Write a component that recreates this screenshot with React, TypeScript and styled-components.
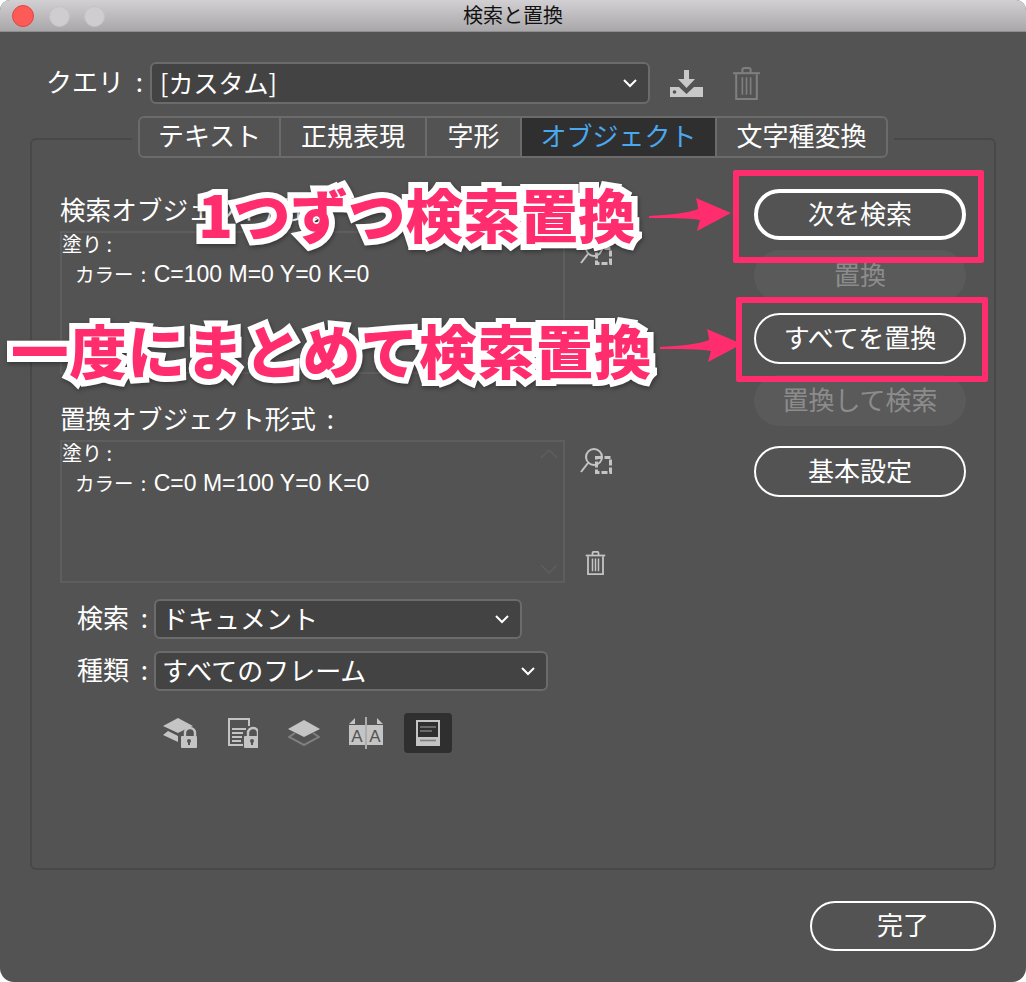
import React from "react";
import styled, { createGlobalStyle } from "styled-components";

const GlobalStyle = createGlobalStyle`
  html, body {
    margin: 0;
    padding: 0;
    background: #ffffff;
  }
  * {
    box-sizing: border-box;
  }
`;

const Window = styled.div`
  width: 1026px;
  height: 982px;
  position: relative;
  overflow: hidden;
  background: #535353;
  border-radius: 10px 10px 14px 14px;
  font-family: "Noto Sans CJK JP", "Noto Sans", sans-serif;
  color: #ffffff;
`;

const TitleBar = styled.div`
  height: 32px;
  display: flex;
  align-items: center;
  justify-content: center;
  position: relative;
  padding-bottom: 2px;
  background: linear-gradient(#d2d0d2, #a9a7a9);
  border-bottom: 1px solid #8e8e8e;
  color: #111111;
  font-size: 20px;
`;

const Lights = styled.div`
  position: absolute;
  left: 12px;
  top: 5px;
  display: flex;
  align-items: center;
  gap: 15px;
`;

const Light = styled.span<{ $red?: boolean }>`
  width: ${(p) => (p.$red ? 22 : 21)}px;
  height: ${(p) => (p.$red ? 22 : 21)}px;
  border-radius: 50%;
  margin-right: ${(p) => (p.$red ? 0 : -1)}px;
  background: ${(p) => (p.$red ? "#fc5b57" : "#cfcdcf")};
  border: 1px solid ${(p) => (p.$red ? "#e0443e" : "#c4c2c4")};
`;

const Content = styled.div`
  padding: 30px 30px 0;
`;

const QueryRow = styled.div`
  display: flex;
  align-items: center;
  height: 42px;
  padding-left: 16px;
`;

const Label = styled.span<{ $width: number }>`
  width: ${(p) => p.$width}px;
  flex: none;
  font-size: 26px;
  line-height: 26px;
  padding-bottom: 4px;
  white-space: nowrap;
  word-spacing: 6px;
`;

const Select = styled.div<{ $width: number }>`
  width: ${(p) => p.$width}px;
  height: 42px;
  flex: none;
  display: flex;
  align-items: center;
  justify-content: space-between;
  padding: 0 10px 3px 8px;
  background: #434343;
  border: 2px solid #6b6b6b;
  border-radius: 6px;
  font-size: 25px;
  color: #ffffff;
`;

const ChevronIcon = styled.svg`
  margin-top: 3px;
`;

const Chevron = () => (
  <ChevronIcon width="16" height="10" viewBox="0 0 16 10" fill="none" stroke="#ffffff" strokeWidth="2">
    <path d="M2 2 L8 8 L14 2" />
  </ChevronIcon>
);

const DownloadIcon = styled.svg`
  margin-left: 20px;
  flex: none;
`;

const TopTrash = styled.svg`
  margin-left: 30px;
  flex: none;
`;

const TabStrip = styled.div`
  position: relative;
  z-index: 1;
  display: flex;
  width: 750px;
  height: 42px;
  margin: 12px 0 0 108px;
  background: #535353;
  border: 2px solid #6b6b6b;
  border-radius: 6px;
  box-shadow: 0 0 0 6px #535353;
  overflow: hidden;
`;

const Tab = styled.div<{ $width: number; $active?: boolean }>`
  width: ${(p) => p.$width}px;
  flex: none;
  display: flex;
  align-items: center;
  justify-content: center;
  padding-bottom: 5px;
  font-size: 26px;
  color: ${(p) => (p.$active ? "#4aa8f0" : "#ffffff")};
  background: ${(p) => (p.$active ? "#2f2f2f" : "transparent")};
  border-right: 2px solid #6b6b6b;
  &:last-child {
    border-right: none;
  }
`;

const Panel = styled.div`
  margin-top: -20px;
  height: 732px;
  display: flex;
  border: 2px solid #484848;
  border-radius: 6px;
  padding: 55px 0 0 28px;
`;

const LeftColumn = styled.div`
  width: 552px;
  flex: none;
  display: flex;
  flex-direction: column;
`;

const FieldTitle = styled.div<{ $gap?: number }>`
  height: 30px;
  margin: ${(p) => p.$gap ?? 0}px 0 6px;
  font-size: 25.6px;
  line-height: 28px;
  word-spacing: 5px;
  white-space: nowrap;
`;

const ObjectRow = styled.div`
  display: flex;
  height: 143px;
`;

const ObjectBox = styled.div`
  width: 505px;
  flex: none;
  position: relative;
  border: 2px solid #5e5e5e;
  font-size: 20px;
  line-height: 22px;
`;

const Indent = styled.div`
  margin-top: 8px;
  padding-left: 13px;
  font-size: 19.5px;
  word-spacing: 3px;
  white-space: nowrap;
`;

const Latin = styled.span`
  font-family: "Liberation Sans", Arial, sans-serif;
  font-size: 23px;
  word-spacing: 0;
`;

const Scroll = styled.svg<{ $bottom?: boolean }>`
  position: absolute;
  right: 4px;
  ${(p) => (p.$bottom ? "bottom: 6px;" : "top: 6px;")}
`;

const ToolColumn = styled.div`
  flex: 1;
  display: flex;
  flex-direction: column;
  justify-content: space-between;
  align-items: flex-start;
  padding: 8px 0 8px 15px;
`;

const TrashIndent = styled.span`
  margin-left: 5px;
  display: block;
  height: 24px;
`;

const OptionRow = styled.div<{ $gap: number }>`
  display: flex;
  align-items: center;
  height: 40px;
  margin-top: ${(p) => p.$gap}px;
  padding-left: 17px;
`;

const OptionSelect = styled(Select)`
  height: 40px;
  padding-left: 6px;
  font-size: 26px;
`;

const IconRow = styled.div`
  display: flex;
  gap: 14px;
  margin: 22px 0 0 96px;
`;

const IconSlot = styled.div<{ $active?: boolean }>`
  width: 48px;
  height: 40px;
  display: flex;
  align-items: center;
  justify-content: center;
  border-radius: 4px;
  background: ${(p) => (p.$active ? "#2f2f2f" : "transparent")};
`;

const ButtonColumn = styled.div`
  width: 212px;
  flex: none;
  margin: -6px 0 0 142px;
  display: flex;
  flex-direction: column;
`;

const PillButton = styled.div<{ $top?: number; $disabled?: boolean; $strong?: boolean }>`
  height: 51px;
  margin-top: ${(p) => p.$top ?? 0}px;
  display: flex;
  align-items: center;
  justify-content: center;
  padding-bottom: 4px;
  border-radius: 26px;
  font-size: 26px;
  color: ${(p) => (p.$disabled ? "#8c8c8c" : "#ffffff")};
  background: ${(p) => (p.$disabled ? "#5a5a5a" : "transparent")};
  border: ${(p) => (p.$disabled ? "none" : `${p.$strong ? 4 : 2}px solid #ffffff`)};
`;

const Footer = styled.div`
  display: flex;
  justify-content: flex-end;
  margin-top: 31px;
`;

const DoneButton = styled(PillButton)`
  width: 186px;
  height: 50px;
  padding-bottom: 5px;
`;

const Callout = styled.div<{ $left: number; $top: number; $spacing?: number }>`
  position: absolute;
  z-index: 5;
  left: ${(p) => p.$left}px;
  top: ${(p) => p.$top}px;
  font-size: 57.5px;
  line-height: 70px;
  font-weight: 900;
  letter-spacing: ${(p) => p.$spacing ?? 0}px;
  white-space: nowrap;
  color: #ff2d6e;
  -webkit-text-stroke: 12px #ffffff;
  paint-order: stroke fill;
  filter: drop-shadow(1px 2px 2px rgba(0, 0, 0, 0.35));
`;

const Frame = styled.div<{ $left: number; $top: number; $width: number; $height: number }>`
  position: absolute;
  z-index: 4;
  left: ${(p) => p.$left}px;
  top: ${(p) => p.$top}px;
  width: ${(p) => p.$width}px;
  height: ${(p) => p.$height}px;
  border: 6px solid #ff2d6e;
  border-radius: 2px;
`;

const Arrow = styled.svg<{ $left: number; $top: number }>`
  position: absolute;
  z-index: 4;
  left: ${(p) => p.$left}px;
  top: ${(p) => p.$top}px;
`;

const ArrowShape = ({ left, top }: { left: number; top: number }) => (
  <Arrow $left={left} $top={top} width="84" height="36" viewBox="0 0 84 36">
    <path
      d="M1 20 C20 19 40 17 50 13 C50 10 49 6 48 2 L83 17 L49 35 C50 31 51 27 52 24 C40 22 20 22 1 22 Z"
      fill="#ff2d6e"
    />
  </Arrow>
);

const TrashShape = ({ color, w, h }: { color: string; w: number; h: number }) => (
  <svg width={w} height={h} viewBox="0 0 26 32" fill="none" stroke={color} strokeWidth="2.4">
    <path d="M0 6 H26" />
    <path d="M9 6 V3 Q9 1 11 1 H15 Q17 1 17 3 V6" />
    <path d="M3 7 V31 H23 V7" />
    <path d="M9 10 V27 M13 10 V27 M17 10 V27" strokeWidth="2" />
  </svg>
);

const FindShape = () => (
  <svg width="32" height="26" viewBox="0 0 32 26" fill="none" stroke="#c4c4c4">
    <path d="M16.5 9.5 H30.5 V24.5 H16.5 Z" strokeWidth="3" strokeDasharray="6 2" />
    <circle cx="14" cy="9" r="8" strokeWidth="2" />
    <path d="M8 15 L1 24" strokeWidth="2" />
  </svg>
);

const LockShape = ({ x, y }: { x: number; y: number }) => (
  <g transform={`translate(${x} ${y})`}>
    <path d="M4 9 V6 a5 5 0 0 1 10 0 V9" fill="none" stroke="#c4c4c4" strokeWidth="2.4" />
    <rect x="0" y="9" width="16" height="12" rx="1" fill="#c4c4c4" stroke="none" />
    <circle cx="8" cy="14" r="2" fill="#535353" stroke="none" />
    <rect x="7" y="14" width="2" height="4" fill="#535353" stroke="none" />
  </g>
);

const ScrollMarks = () => (
  <>
    <Scroll width="20" height="12" viewBox="0 0 20 12" fill="none" stroke="#5e5e5e" strokeWidth="1.5">
      <path d="M2 10 L10 2 L18 10" />
    </Scroll>
    <Scroll $bottom width="20" height="12" viewBox="0 0 20 12" fill="none" stroke="#5e5e5e" strokeWidth="1.5">
      <path d="M2 2 L10 10 L18 2" />
    </Scroll>
  </>
);

const ObjectField = ({ color }: { color: string }) => (
  <ObjectRow>
    <ObjectBox>
      塗り :
      <Indent>
        カラー : <Latin>{color}</Latin>
      </Indent>
      <ScrollMarks />
    </ObjectBox>
    <ToolColumn>
      <FindShape />
      <TrashIndent>
        <TrashShape color="#c4c4c4" w={21} h={24} />
      </TrashIndent>
    </ToolColumn>
  </ObjectRow>
);

const App = () => {
  return (
    <>
      <GlobalStyle />
      <Window>
        <TitleBar>
          <Lights>
            <Light $red />
            <Light />
            <Light />
          </Lights>
          検索と置換
        </TitleBar>
        <Content>
          <QueryRow>
            <Label $width={104}>クエリ :</Label>
            <Select $width={500}>
              [カスタム]
              <Chevron />
            </Select>
            <DownloadIcon width="33" height="27" viewBox="0 0 33 27" fill="#c8c8c8">
              <rect x="14" y="0" width="5" height="10" />
              <path d="M8 9 H25 L16.5 18 Z" />
              <path d="M0 17 H9 L16.5 24 L24 17 H33 V27 H0 Z" />
              <circle cx="4.5" cy="22" r="1.8" fill="#535353" />
            </DownloadIcon>
            <TopTrash width="27" height="33" viewBox="0 0 26 32" fill="none" stroke="#7f7f7f" strokeWidth="2">
              <path d="M0 6 H26" />
              <path d="M9 6 V3 Q9 1 11 1 H15 Q17 1 17 3 V6" />
              <path d="M3 7 V31 H23 V7" />
              <path d="M9 10 V27 M13 10 V27 M17 10 V27" strokeWidth="1.6" />
            </TopTrash>
          </QueryRow>
          <TabStrip>
            <Tab $width={141}>テキスト</Tab>
            <Tab $width={146}>正規表現</Tab>
            <Tab $width={95}>字形</Tab>
            <Tab $width={195} $active>オブジェクト</Tab>
            <Tab $width={169}>文字種変換</Tab>
          </TabStrip>
          <Panel>
            <LeftColumn>
              <FieldTitle>検索オブジェクト形式 :</FieldTitle>
              <ObjectField color="C=100 M=0 Y=0 K=0" />
              <FieldTitle $gap={30}>置換オブジェクト形式 :</FieldTitle>
              <ObjectField color="C=0 M=100 Y=0 K=0" />
              <OptionRow $gap={16}>
                <Label $width={77}>検索 :</Label>
                <OptionSelect $width={368}>
                  ドキュメント
                  <Chevron />
                </OptionSelect>
              </OptionRow>
              <OptionRow $gap={12}>
                <Label $width={77}>種類 :</Label>
                <OptionSelect $width={394}>
                  すべてのフレーム
                  <Chevron />
                </OptionSelect>
              </OptionRow>
              <IconRow>
                <IconSlot>
                  <svg width="36" height="30" viewBox="0 0 36 30" fill="#c4c4c4">
                    <path d="M16 0 L31 8 L22 12 L16 15 L1 8 Z" />
                    <path d="M6 13 L16 18 V24 L1 17 Z" />
                    <LockShape x={19} y={9} />
                  </svg>
                </IconSlot>
                <IconSlot>
                  <svg width="32" height="30" viewBox="-2 0 32 30" fill="none" stroke="#c4c4c4" strokeWidth="2">
                    <path d="M15 27 H1 V1 H21 V8" />
                    <path d="M4 11 H18 M4 15 H15 M4 19 H14 M4 23 H13" />
                    <LockShape x={16} y={9} />
                  </svg>
                </IconSlot>
                <IconSlot>
                  <svg width="32" height="26" viewBox="0 0 32 26" fill="none">
                    <path d="M16 0 L32 9 L16 17 L0 9 Z" fill="#c4c4c4" />
                    <path d="M7 13 L1 17 L16 25 L31 17 L25 13" stroke="#7f7f7f" strokeWidth="2" />
                  </svg>
                </IconSlot>
                <IconSlot>
                  <svg width="34" height="32" viewBox="0 0 34 32" fill="#c4c4c4">
                    <path d="M0 7 L6 1 V7 Z M34 7 L28 1 V7 Z" />
                    <rect x="0" y="8" width="16" height="20" />
                    <rect x="18" y="8" width="16" height="20" />
                    <rect x="16.2" y="0" width="1.6" height="32" />
                    <text x="8" y="25" fontSize="17" textAnchor="middle" fill="#535353" fontFamily="Liberation Sans">A</text>
                    <text x="26" y="25" fontSize="17" textAnchor="middle" fill="#535353" fontFamily="Liberation Sans">A</text>
                  </svg>
                </IconSlot>
                <IconSlot $active>
                  <svg width="24" height="26" viewBox="0 0 24 26" fill="none">
                    <rect x="1" y="1" width="22" height="24" stroke="#c4c4c4" strokeWidth="2" />
                    <path d="M4 7 H20 M4 11 H16" stroke="#7f7f7f" strokeWidth="1.6" />
                    <rect x="2" y="17" width="20" height="7" fill="#c4c4c4" />
                    <path d="M4 20.5 H20" stroke="#7f7f7f" strokeWidth="1.6" />
                  </svg>
                </IconSlot>
              </IconRow>
            </LeftColumn>
            <ButtonColumn>
              <PillButton $strong>次を検索</PillButton>
              <PillButton $top={10} $disabled>置換</PillButton>
              <PillButton $top={12}>すべてを置換</PillButton>
              <PillButton $top={11} $disabled>置換して検索</PillButton>
              <PillButton $top={20}>基本設定</PillButton>
            </ButtonColumn>
          </Panel>
          <Footer>
            <DoneButton>完了</DoneButton>
          </Footer>
        </Content>
        <Frame $left={733} $top={170} $width={251} $height={93} />
        <Frame $left={736} $top={297} $width={252} $height={85} />
        <ArrowShape left={648} top={196} />
        <ArrowShape left={659} top={327} />
        <Callout $left={198} $top={178}>1つずつ検索置換</Callout>
        <Callout $left={11} $top={314} $spacing={0.8}>一度にまとめて検索置換</Callout>
      </Window>
    </>
  );
};

export default App;
